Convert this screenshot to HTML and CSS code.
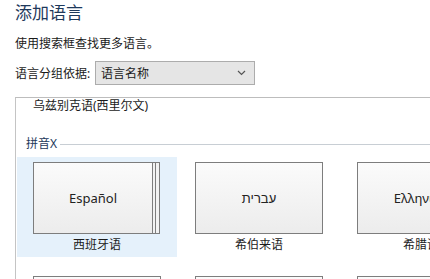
FILE: index.html
```html
<!DOCTYPE html>
<html lang="zh-CN">
<head>
  <meta charset="UTF-8">
  <meta name="viewport" content="width=device-width, initial-scale=1.0">
  <title>添加语言</title>
  <link rel="stylesheet" href="styles.css">
</head>
<body>
  <div class="page">
    <h1 class="title">添加语言</h1>
    <p class="hint">使用搜索框查找更多语言。</p>
    <div class="group-row">
      <span class="group-label">语言分组依据:</span>
      <div class="select">
        <span>语言名称</span>
        <svg class="chevron" width="9" height="6" viewBox="0 0 9 6">
          <path d="M1 1 L4.5 4.5 L8 1" fill="none" stroke="#555" stroke-width="1.2"/>
        </svg>
      </div>
    </div>

    <div class="panel">
      <div class="prev-item">乌兹别克语(西里尔文)</div>

      <div class="group-head"><span>拼音X</span></div>

      <div class="grid">
        <div class="item selected">
          <div class="tile stacked">Español</div>
          <div class="label">西班牙语</div>
        </div>
        <div class="item">
          <div class="tile" dir="rtl">עברית</div>
          <div class="label">希伯来语</div>
        </div>
        <div class="item">
          <div class="tile">Ελληνικά</div>
          <div class="label">希腊语</div>
        </div>
        <div class="item">
          <div class="tile"></div>
        </div>
        <div class="item">
          <div class="tile"></div>
        </div>
        <div class="item">
          <div class="tile"></div>
        </div>
      </div>
    </div>
  </div>
</body>
</html>
```

FILE: styles.css
```css
body {
  margin: 0;
  background-color: #ffffff;
  color: #1a1a1a;
  font-family: "Noto Sans", "Noto Sans CJK SC", sans-serif;
  overflow: hidden;
  height: 279px;
}

.page {
  padding-left: 15px;
  padding-top: 1px;
}

.title {
  margin: 0;
  font-size: 17px;
  line-height: 24px;
  font-weight: normal;
  color: #1e395b;
}

.hint {
  margin: 10px 0 0;
  font-size: 12px;
  line-height: 18px;
}

.group-row {
  display: flex;
  align-items: center;
  margin-top: 8px;
  font-size: 12px;
}

.group-label {
  width: 80px;
}

.select {
  display: flex;
  align-items: center;
  justify-content: space-between;
  box-sizing: border-box;
  width: 160px;
  height: 24px;
  padding: 0 8px 0 5px;
  background-color: #e5e5e5;
  border: 1px solid #acacac;
}

.panel {
  margin-top: 12px;
  margin-right: -40px;
  border-top: 1px solid #bdbdbd;
  border-left: 1px solid #c4c4c4;
  overflow: hidden;
  height: 181px;
}

.prev-item {
  padding-left: 17px;
  font-size: 12px;
  line-height: 16px;
}

.group-head {
  display: flex;
  align-items: center;
  margin-top: 22px;
  padding-left: 10px;
  font-size: 12px;
  line-height: 16px;
  color: #1e395b;
}

.group-head::after {
  content: "";
  flex: 1;
  height: 1px;
  margin-left: 3px;
  background-color: #c8ced4;
}

.grid {
  display: grid;
  grid-template-columns: repeat(3, 160px);
  column-gap: 2px;
  row-gap: 14px;
  margin-top: 5px;
  padding-left: 1px;
}

.item {
  box-sizing: border-box;
  height: 100px;
  padding: 5px 0 0 16px;
}

.item.selected {
  background-color: #e5f1fb;
}

.tile {
  box-sizing: border-box;
  width: 128px;
  height: 72px;
  display: flex;
  align-items: center;
  justify-content: center;
  border: 1px solid #7d7d7d;
  background: linear-gradient(#fbfbfb, #ececec);
  font-size: 13px;
  color: #222;
  white-space: nowrap;
  overflow: hidden;
}

.tile.stacked {
  width: 120px;
  overflow: visible;
  box-shadow: 3px 0 0 -1px #f2f2f2, 3px 0 0 0 #7d7d7d,
              7px 0 0 -1px #f2f2f2, 7px 0 0 0 #7d7d7d;
}

.label {
  width: 128px;
  margin-top: 3px;
  text-align: center;
  font-size: 12px;
  line-height: 16px;
  white-space: nowrap;
}
```
